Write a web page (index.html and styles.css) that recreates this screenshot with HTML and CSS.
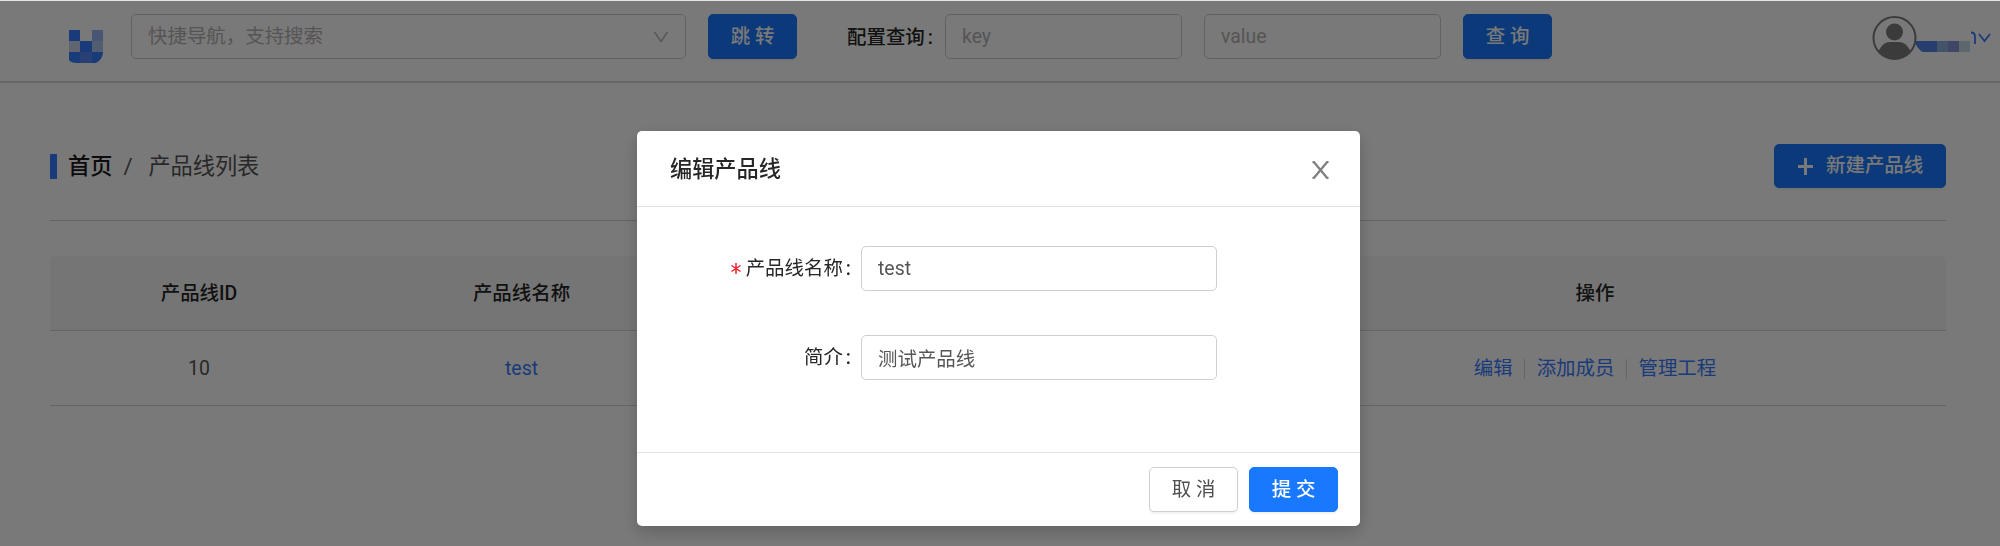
FILE: index.html
```html
<!DOCTYPE html>
<html lang="zh-CN">
<head>
<meta charset="utf-8">
<title>产品线列表</title>
<link rel="stylesheet" href="styles.css">
</head>
<body>
<div class="page">
  <header class="topbar">
    <svg class="logo" width="34" height="33" viewBox="0 0 34 33">
      <rect x="0" y="0" width="11" height="11" fill="#377cff"/>
      <rect x="23" y="0" width="11" height="11" fill="#98b4f4"/>
      <rect x="0" y="11" width="11" height="11" fill="#ccd6f0"/>
      <rect x="11" y="11" width="12" height="11" fill="#377cff"/>
      <rect x="23" y="11" width="11" height="11" fill="#b0c4ec"/>
      <path d="M0 22h11v11H8Q2 33 0 30z" fill="#377cff"/>
      <rect x="11" y="22" width="12" height="11" fill="#5788f4"/>
      <path d="M23 22h11v1q-1 7-7 10h-4z" fill="#377cff"/>
    </svg>
    <div class="select">
      <span>快捷导航，支持搜索</span>
      <svg width="14" height="12" viewBox="0 0 14 12"><path d="M.5 1L7 10.500 13.500 1" fill="none" stroke="#b4b4b4" stroke-width="1.400"/></svg>
    </div>
    <button class="btn primary jump">跳 转</button>
    <label class="query-label">配置查询<span class="colon">:</span></label>
    <input class="input query" placeholder="key">
    <input class="input query value" placeholder="value">
    <button class="btn primary search">查 询</button>
    <div class="user">
      <svg width="122" height="46" viewBox="0 0 122 46">
        <path d="M42 26h23v11H51q-5-2-9-11z" fill="#5085e8"/>
        <rect x="65" y="26" width="11" height="11" fill="#8eb0dc"/>
        <rect x="76" y="26" width="11" height="11" fill="#8a94da"/>
        <rect x="87" y="26" width="11" height="11" fill="#c5d9e8"/>
        <circle cx="22.500" cy="23" r="21" fill="#fff" stroke="#7c7c7c" stroke-width="2"/>
        <circle cx="22.500" cy="17" r="8.500" fill="#7c7c7c"/>
        <path d="M6.500 36Q11 27 18 27h9q7 0 11.500 9Q32 44 22.500 44T6.500 36z" fill="#7c7c7c"/>
        <path d="M99 17.500q4 0 4 4V29" fill="none" stroke="#377cff" stroke-width="1.800"/>
        <path d="M107 19l5.500 7 5.500-7" fill="none" stroke="#377cff" stroke-width="1.800"/>
      </svg>
    </div>
  </header>
  <main class="content">
    <div class="heading">
      <nav class="crumbs"><i class="mark"></i><b>首页</b><span class="slash">/</span><span>产品线列表</span></nav>
      <button class="btn primary create">
        <svg width="15" height="17" viewBox="0 0 15 17"><path d="M0 8.500h15M7.500 0v17" stroke="#fff" stroke-width="3"/></svg>
        <span>新建产品线</span>
      </button>
    </div>
    <div class="table">
      <div class="row head"><div>产品线ID</div><div>产品线名称</div><div></div><div>操作</div></div>
      <div class="row">
        <div>10</div><div><a>test</a></div><div></div>
        <div class="actions"><a>编辑</a><i></i><a>添加成员</a><i></i><a>管理工程</a></div>
      </div>
    </div>
  </main>
</div>
<div class="mask">
  <section class="modal">
    <header class="modal-head">
      <h2>编辑产品线</h2>
      <svg width="17" height="18" viewBox="0 0 17 18"><path d="M.5 1.200H2L15 16.800h1.500M16.500 1.200H15L2 16.800H.5" fill="none" stroke="#808080" stroke-width="2.200"/></svg>
    </header>
    <div class="modal-body">
      <div class="field"><label><svg class="required" width="10" height="11" viewBox="0 0 10 11"><path d="M5 0v11M.5 2.500l9 6M9.500 2.500l-9 6" stroke="#f5222d" stroke-width="1.500"/></svg>产品线名称<span class="colon">:</span></label><input class="input" value="test"></div>
      <div class="field"><label>简介<span class="colon">:</span></label><input class="input" value="测试产品线"></div>
    </div>
    <footer class="modal-foot">
      <button class="btn">取 消</button>
      <button class="btn primary">提 交</button>
    </footer>
  </section>
</div>
</body>
</html>
```
FILE: styles.css
```css
* { box-sizing: border-box; }
body {
  margin: 0;
  height: 546px;
  overflow: hidden;
  background: #fff;
  color: #565656;
  font: 19.440px/28px Roboto, "Noto Sans CJK SC", sans-serif;
}
.page { height: 546px; border-top: 1px solid #e4e4e4; }
.topbar {
  display: flex;
  align-items: flex-start;
  height: 82px;
  padding: 13px 6px 0 69px;
  border-bottom: 2px solid #dadada;
}
.logo { margin: 16px 28px 0 0; }
.select, .input {
  height: 45px;
  padding: 0 15px 0 16px;
  border: 1px solid #cfcfcf;
  border-radius: 5px;
  background: #fff;
}
.input { font: inherit; color: #565656; outline: none; }
.input::placeholder { color: #b4b4b4; opacity: 1; }
.select {
  display: flex;
  align-items: center;
  justify-content: space-between;
  width: 555px;
  padding-right: 17px;
  color: #b4b4b4;
}
.select span { padding-top: 1px; }
.btn {
  height: 45px;
  width: 89px;
  padding: 0;
  border: 1px solid #cfcfcf;
  border-radius: 5px;
  background: #fff;
  color: #505050;
  font: inherit;
  white-space: nowrap;
  box-shadow: 0 2px 2px rgba(0, 0, 0, .05);
}
.primary { border-color: #1879ff; background: #1879ff; color: #fff; font-weight: 500; }
.jump { margin-left: 22px; }
.query-label { width: 98px; margin: 10px 0 0 50px; color: #262626; white-space: nowrap; font-weight: 500; }
.colon { margin-left: 3px; font-weight: 500; }
.query { width: 237px; }
.value { margin: 0 22px; }
.user { display: flex; margin: 1px 0 0 auto; }
.content { padding: 62px 54px 0 50px; }
.heading {
  display: flex;
  justify-content: space-between;
  height: 76px;
  border-bottom: 1px solid #d0d0d0;
  margin-bottom: 35px;
}
.crumbs { display: flex; align-items: center; height: 42px; font-size: 22.200px; white-space: nowrap; }
.crumbs b { color: #1a1a1a; font-weight: 500; }
.mark { width: 7px; height: 25px; margin-right: 11px; background: #377cff; }
.slash { width: 36px; padding-left: 11px; }
.create {
  display: flex;
  align-items: center;
  gap: 13px;
  width: 172px;
  height: 44px;
  margin-top: -1px;
  padding-left: 23px;
}
.row {
  display: grid;
  grid-template-columns: 298px 347px 549px 702px;
  align-items: center;
  height: 75px;
  padding-top: 2px;
  border-bottom: 1px solid #d6d6d6;
  text-align: center;
}
.head { border-radius: 5px 5px 0 0; background: #f7f7f7; color: #262626; font-weight: 500; }
a { color: #377cff; }
.actions { display: flex; align-items: center; justify-content: center; }
.actions i { width: 1px; height: 20px; margin: 0 11.500px; background: #d4d4d4; }
.mask {
  position: fixed;
  inset: 1px 0 0;
  display: flex;
  justify-content: center;
  align-items: flex-start;
  padding: 130px 3px 0 0;
  background: rgba(0, 0, 0, .525);
}
.modal {
  width: 723px;
  height: 395px;
  display: flex;
  flex-direction: column;
  border-radius: 5px;
  background: #fff;
  box-shadow: 0 6px 17px rgba(0, 0, 0, .2);
}
.modal-head {
  display: flex;
  align-items: center;
  justify-content: space-between;
  height: 76px;
  padding: 0 31px 0 33px;
  border-bottom: 1px solid #e2e2e2;
}
.modal-head svg { margin-top: 2px; }
.modal-head h2 { margin: 0; color: #262626; font-size: 22.200px; font-weight: 500; }
.modal-body { flex: 1; padding: 39px 0 0; }
.field { display: flex; align-items: center; margin-bottom: 44px; }
.field label { width: 214px; margin-right: 10px; padding-top: 1px; text-align: right; color: #262626; }
.field .input { width: 356px; }
.required { margin-right: 5px; vertical-align: 1px; }
.modal-foot {
  display: flex;
  justify-content: flex-end;
  gap: 11px;
  height: 74px;
  padding: 14px 22px 0;
  border-top: 1px solid #e2e2e2;
}
```
